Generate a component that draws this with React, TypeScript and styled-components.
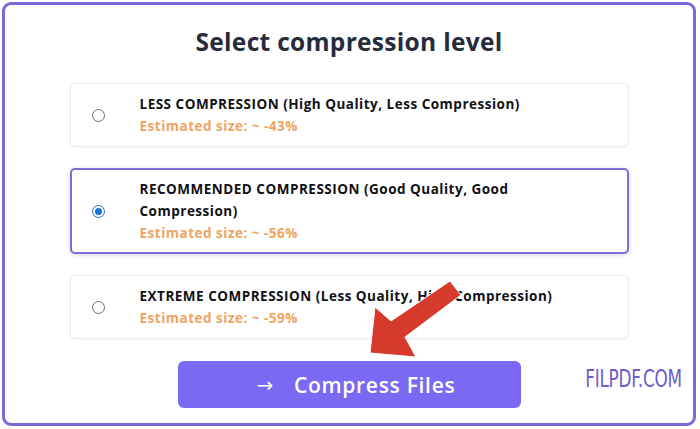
import React from "react";
import styled, { createGlobalStyle } from "styled-components";

const Global = createGlobalStyle`
  html, body { margin: 0; padding: 0; background: #ffffff; }
  body { font-family: "Open Sans", "Noto Sans", sans-serif; }
  * { box-sizing: border-box; }
`;

const Frame = styled.div`
  position: relative;
  margin: 2px 4px 0 2px;
  height: 424px;
  border: 3px solid #7b69d9;
  border-radius: 9px;
  background: #fff;
  display: flex;
  flex-direction: column;
  align-items: center;
  padding-top: 21px;
`;

const Title = styled.h1`
  margin: 0;
  font-family: "Open Sans", sans-serif;
  font-weight: 700;
  font-size: 24.5px;
  line-height: 32px;
  letter-spacing: 0.3px;
  color: #272b3b;
`;

const List = styled.div`
  margin-top: 25px;
  width: 559px;
  display: flex;
  flex-direction: column;
  gap: 21px;
`;

const Card = styled.label<{ $selected?: boolean }>`
  display: flex;
  align-items: center;
  padding: ${(p) => (p.$selected ? "8px 20px 8px 20px" : "9px 20px 9px 21px")};
  border: ${(p) => (p.$selected ? "2px solid #7b6fd8" : "1px solid #ebe9f3")};
  border-radius: 5px;
  background: #fff;
  box-shadow: ${(p) =>
    p.$selected ? "0 1px 4px rgba(90, 70, 180, 0.25)" : "0 1px 2px rgba(0,0,0,0.04)"};
  cursor: pointer;
`;

const Radio = styled.span<{ $checked?: boolean }>`
  flex: none;
  width: 13px;
  height: 13px;
  border-radius: 50%;
  border: ${(p) => (p.$checked ? "1.5px solid #1b73d8" : "1px solid #6f6f6f")};
  display: flex;
  align-items: center;
  justify-content: center;
  margin-right: 35px;
  &::after {
    content: "";
    display: ${(p) => (p.$checked ? "block" : "none")};
    width: 7px;
    height: 7px;
    border-radius: 50%;
    background: #1b73d8;
  }
`;

const Texts = styled.div`
  display: flex;
  flex-direction: column;
  max-width: 420px;
`;

const Label = styled.div`
  font-family: "Open Sans", sans-serif;
  font-weight: 700;
  font-size: 13.5px;
  line-height: 22px;
  letter-spacing: 0.5px;
  color: #111116;
`;

const Estimate = styled.div`
  font-family: "Open Sans", sans-serif;
  font-weight: 700;
  font-size: 13.5px;
  line-height: 22px;
  letter-spacing: 0.5px;
  color: #f0a45f;
`;

const Button = styled.button`
  margin-top: 22px;
  width: 343px;
  height: 47px;
  border: none;
  border-radius: 6px;
  background: #7b69f4;
  color: #fff;
  font-family: "Open Sans", sans-serif;
  font-weight: 600;
  font-size: 21px;
  letter-spacing: 0.7px;
  display: flex;
  align-items: center;
  justify-content: center;
  gap: 20px;
  padding: 0 0 0 14px;
  cursor: pointer;
`;

const ArrowGlyph = styled.span`
  font-weight: 400;
  font-size: 20px;
  font-family: "DejaVu Sans", sans-serif;
`;

const Watermark = styled.div`
  position: absolute;
  right: 11px;
  bottom: 31px;
  font-family: "DejaVu Sans Condensed", "DejaVu Sans", sans-serif;
  font-size: 25px;
  line-height: 26px;
  color: #6b5ccc;
  letter-spacing: -0.3px;
  transform: scaleX(0.75);
  transform-origin: right center;
`;

const Pointer = styled.svg`
  position: absolute;
  left: -5px;
  top: -5px;
  pointer-events: none;
`;

const options = [
  { label: "LESS COMPRESSION (High Quality, Less Compression)", size: "~ -43%", selected: false },
  { label: "RECOMMENDED COMPRESSION (Good Quality, Good Compression)", size: "~ -56%", selected: true },
  { label: "EXTREME COMPRESSION (Less Quality, High Compression)", size: "~ -59%", selected: false },
];

export default function App() {
  return (
    <>
      <Global />
      <Frame>
        <Title>Select compression level</Title>
        <List>
          {options.map((o) => (
            <Card key={o.label} $selected={o.selected}>
              <Radio $checked={o.selected} />
              <Texts>
                <Label>{o.label}</Label>
                <Estimate>Estimated size: {o.size}</Estimate>
              </Texts>
            </Card>
          ))}
        </List>
        <Button>
          <ArrowGlyph>→</ArrowGlyph>
          <span>Compress Files</span>
        </Button>
        <Watermark>FILPDF.COM</Watermark>
        <Pointer width="700" height="429" viewBox="0 0 700 429">
          <polygon
            points="450,281 461,295 405,337 416,357 370,353 375,307 391,321"
            fill="#d63a2c"
            stroke="#ffffff"
            strokeWidth="1"
            strokeLinejoin="round"
          />
        </Pointer>
      </Frame>
    </>
  );
}
